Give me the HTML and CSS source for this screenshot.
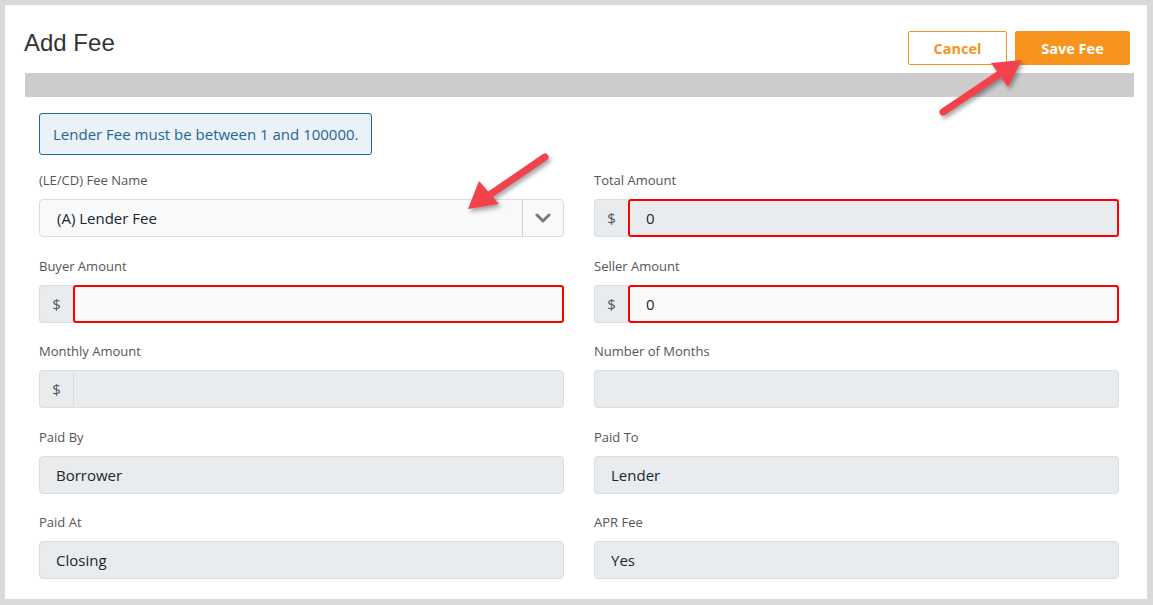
FILE: index.html
```html
<!DOCTYPE html>
<html lang="en">

<head>
    <meta charset="UTF-8">
    <meta name="viewport" content="width=device-width, initial-scale=1.0">
    <title>Add Fee</title>
    <link rel="stylesheet" href="styles.css">
</head>

<body>
    <div class="panel">
        <div class="header">
            <h1>Add Fee</h1>
            <div class="actions">
                <button type="button" class="btn cancel-btn">Cancel</button>
                <button type="button" class="btn save-btn">Save Fee</button>
            </div>
        </div>

        <div class="bar"></div>

        <form class="fee-form">
            <div class="alert">Lender Fee must be between 1 and 100000.</div>

            <div class="grid">
                <div class="field">
                    <label>(LE/CD) Fee Name</label>
                    <div class="select">
                        <span class="select-value">(A) Lender Fee</span>
                        <span class="select-arrow">
                            <svg width="16" height="10" viewBox="0 0 16 10">
                                <polyline points="2,2 8,8 14,2" fill="none" stroke="#7a7a7a" stroke-width="3" stroke-linecap="round" stroke-linejoin="round" />
                            </svg>
                        </span>
                    </div>
                </div>
                <div class="field">
                    <label>Total Amount</label>
                    <div class="input-group">
                        <span class="addon">$</span>
                        <div class="input disabled invalid">0</div>
                    </div>
                </div>

                <div class="field">
                    <label>Buyer Amount</label>
                    <div class="input-group">
                        <span class="addon">$</span>
                        <div class="input invalid"></div>
                    </div>
                </div>
                <div class="field">
                    <label>Seller Amount</label>
                    <div class="input-group">
                        <span class="addon">$</span>
                        <div class="input invalid">0</div>
                    </div>
                </div>

                <div class="field">
                    <label>Monthly Amount</label>
                    <div class="input-group">
                        <span class="addon">$</span>
                        <div class="input disabled"></div>
                    </div>
                </div>
                <div class="field">
                    <label>Number of Months</label>
                    <div class="input disabled"></div>
                </div>

                <div class="field">
                    <label>Paid By</label>
                    <div class="input disabled">Borrower</div>
                </div>
                <div class="field">
                    <label>Paid To</label>
                    <div class="input disabled">Lender</div>
                </div>

                <div class="field">
                    <label>Paid At</label>
                    <div class="input disabled">Closing</div>
                </div>
                <div class="field">
                    <label>APR Fee</label>
                    <div class="input disabled">Yes</div>
                </div>
            </div>
        </form>
    </div>

    <!-- callout arrows drawn over the screenshot -->
    <svg class="callouts" width="1153" height="605" viewBox="0 0 1153 605">
        <g class="arrow">
            <line x1="545" y1="157" x2="488" y2="196" />
            <polygon points="468,209 479,181 499,204" />
        </g>
        <g class="arrow">
            <line x1="943" y1="112" x2="1001" y2="73" />
            <polygon points="1022,60 991,63 1008,87" />
        </g>
    </svg>
</body>

</html>
```

FILE: styles.css
```css
body {
    margin: 0;
    padding: 5px 6px 6px 5px;
    background-color: #d9d9d9;
    font-family: "Open Sans", Arial, sans-serif;
    color: #212529;
}

.panel {
    background: white;
    height: 594px;
    box-sizing: border-box;
    padding: 26px 13px 0 20px;
}

.header {
    display: flex;
    justify-content: space-between;
    align-items: flex-start;
    padding-right: 4px;
}

h1 {
    margin: 0 0 0 -1px;
    font-family: Arial, "Liberation Sans", sans-serif;
    font-weight: normal;
    font-size: 24px;
    line-height: 24px;
    color: #333;
}

.actions {
    display: flex;
    gap: 8px;
}

.btn {
    height: 34px;
    border: 1px solid #f7941d;
    border-radius: 2px;
    font-family: "Open Sans", Arial, sans-serif;
    font-weight: bold;
    font-size: 14.5px;
    cursor: pointer;
}

.cancel-btn {
    width: 99px;
    background: white;
    color: #f7941d;
}

.save-btn {
    width: 115px;
    background: #f7941d;
    color: white;
}

.bar {
    height: 24px;
    margin-top: 8px;
    background-color: #cccccc;
}

.fee-form {
    padding: 16px 15px 0 14px;
}

.alert {
    display: inline-block;
    box-sizing: border-box;
    width: 333px;
    height: 42px;
    padding: 0 0 0 13px;
    border: 1px solid #1f6595;
    border-radius: 3px;
    background: #eaf2f7;
    color: #1f6595;
    font-size: 15px;
    line-height: 40px;
}

.grid {
    display: grid;
    grid-template-columns: 1fr 1fr;
    column-gap: 30px;
    row-gap: 19.5px;
    margin-top: 16px;
}

.field label {
    display: block;
    font-size: 13px;
    line-height: 18px;
    color: #555;
    margin-bottom: 10px;
}

.select {
    display: flex;
    height: 38px;
    box-sizing: border-box;
    border: 1px solid #dcdcdc;
    border-radius: 4px;
    background: #f8f9fa;
}

.select-value {
    flex: 1;
    padding-left: 17px;
    font-size: 15px;
    line-height: 36px;
}

.select-arrow {
    width: 40px;
    border-left: 1px solid #cfcfcf;
    display: flex;
    justify-content: center;
    align-items: center;
}

.input-group {
    display: flex;
    height: 38px;
}

.addon {
    width: 34px;
    box-sizing: border-box;
    border: 1px solid #dcdcdc;
    border-right: none;
    border-radius: 4px 0 0 4px;
    background: #e9ecef;
    color: #555;
    font-size: 15px;
    line-height: 36px;
    text-align: center;
}

.input {
    height: 38px;
    box-sizing: border-box;
    border: 1px solid #dcdcdc;
    border-radius: 4px;
    background: #f8f9fa;
    padding-left: 16px;
    font-size: 15px;
    line-height: 36px;
}

.input-group .input {
    flex: 1;
    border-radius: 0 4px 4px 0;
}

.input.disabled {
    background: #e9ecef;
}

.input.invalid {
    border: 2px solid #ff0000;
    border-radius: 3px;
    line-height: 34px;
    padding-left: 16px;
}

.callouts {
    position: absolute;
    top: 0;
    left: 0;
    pointer-events: none;
}

.arrow {
    filter: drop-shadow(2px 3px 2px rgba(0, 0, 0, 0.35));
}

.arrow line {
    stroke: #f2434c;
    stroke-width: 7;
    stroke-linecap: round;
}

.arrow polygon {
    fill: #f2434c;
}
```
